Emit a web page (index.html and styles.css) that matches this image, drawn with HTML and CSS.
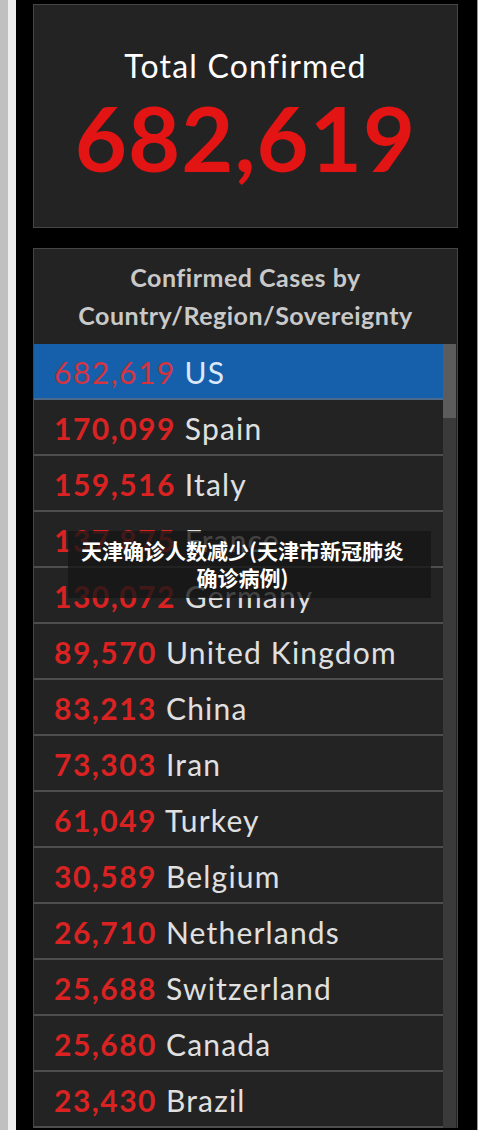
FILE: index.html
```html
<!DOCTYPE html>
<html lang="en">
<head>
  <meta charset="UTF-8" />
  <title>Confirmed Cases</title>
  <link rel="stylesheet" href="styles.css">
</head>
<body>
  <div class="frame">
    <div class="edge-gray"></div>
    <div class="edge-light"></div>

    <div class="board">
      <div class="panel total">
        <div class="total-title">Total Confirmed</div>
        <div class="total-num">682,619</div>
      </div>

      <div class="panel list-panel">
        <div class="list-head">Confirmed Cases by<br>Country/Region/Sovereignty</div>
        <div class="list-body">
          <div class="rows">
            <div class="row active"><span class="num">682,619</span> US</div>
            <div class="row"><span class="num">170,099</span> Spain</div>
            <div class="row"><span class="num">159,516</span> Italy</div>
            <div class="row"><span class="num">137,875</span> France</div>
            <div class="row"><span class="num">130,072</span> Germany</div>
            <div class="row"><span class="num">89,570</span> United Kingdom</div>
            <div class="row"><span class="num">83,213</span> China</div>
            <div class="row"><span class="num">73,303</span> Iran</div>
            <div class="row"><span class="num">61,049</span> Turkey</div>
            <div class="row"><span class="num">30,589</span> Belgium</div>
            <div class="row"><span class="num">26,710</span> Netherlands</div>
            <div class="row"><span class="num">25,688</span> Switzerland</div>
            <div class="row"><span class="num">25,680</span> Canada</div>
            <div class="row"><span class="num">23,430</span> Brazil</div>
          </div>
          <div class="scrollbar"><div class="thumb"></div></div>
        </div>
      </div>
    </div>

    <div class="edge-white"></div>
  </div>

  <div class="caption">天津确诊人数减少(天津市新冠肺炎确诊病例)</div>
</body>
</html>
```

FILE: styles.css
```css
html, body {
  margin: 0;
  height: 1130px;
  overflow: hidden;
  background: #000;
  font-family: Lato, "Open Sans", sans-serif;
}

.frame {
  display: flex;
  height: 1130px;
}

.edge-gray {
  width: 8px;
  background: #c0c0c0;
}

.edge-light {
  width: 8px;
  background: #eeeeee;
}

.board {
  width: 461px;
  padding: 4px 0 0 17px;
  box-sizing: border-box;
  background: #000;
}

.edge-white {
  flex: 1;
  background: #fff;
  border-left: 1px solid #9a9a9a;
}

.panel {
  width: 425px;
  box-sizing: border-box;
  background: #232323;
  border: 1px solid #454545;
}

.total {
  height: 224px;
  text-align: center;
}

.total-title {
  color: #fff;
  font-size: 32px;
  letter-spacing: 1.2px;
  padding-top: 42px;
  line-height: 38px;
}

.total-num {
  color: #e31414;
  font-size: 90px;
  font-weight: bold;
  letter-spacing: 1px;
  line-height: 100px;
  margin-top: 2px;
}

.list-panel {
  margin-top: 20px;
  border-bottom: none;
}

.list-head {
  height: 95px;
  padding-top: 9px;
  box-sizing: border-box;
  text-align: center;
  color: #c9c9c9;
  font-size: 25px;
  font-weight: bold;
  letter-spacing: 0.5px;
  line-height: 38px;
}

.list-body {
  display: flex;
}

.rows {
  width: 409px;
}

.row {
  height: 54px;
  border-bottom: 2px solid #4d4d4d;
  padding-left: 20px;
  color: #e0e0e0;
  font-size: 30px;
  letter-spacing: 1.2px;
  line-height: 56px;
  white-space: nowrap;
}

.row.active {
  background: #1660ab;
  color: #dbe8f8;
  border-bottom-color: #4d6a8a;
}

.num {
  color: #d92222;
  font-weight: bold;
  letter-spacing: 1.5px;
}

.active .num {
  color: #d3343f;
  font-weight: normal;
}

.scrollbar {
  width: 13px;
  background: #3a3a3a;
}

.thumb {
  height: 74px;
  background: #5c5c5c;
}

.caption {
  position: absolute;
  left: 68px;
  top: 531px;
  width: 363px;
  height: 67px;
  box-sizing: border-box;
  padding: 6px 24px 0 10px;
  background: rgba(22, 22, 22, 0.78);
  color: #fff;
  font-family: "Noto Sans CJK SC", sans-serif;
  font-weight: bold;
  font-size: 21px;
  line-height: 27px;
  text-align: center;
}
```
